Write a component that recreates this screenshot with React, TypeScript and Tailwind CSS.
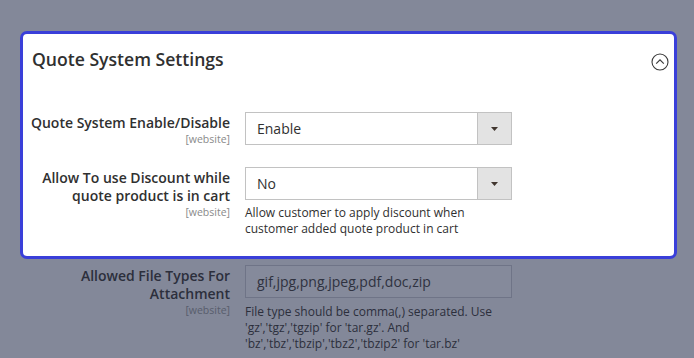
import { ReactNode } from "react";

const font = { fontFamily: '"Open Sans", "Liberation Sans", sans-serif' };

function Label({ lines, dim }: { lines: string[]; dim?: boolean }) {
  return (
    <div className="w-[210px] shrink-0 text-right">
      {lines.map((l) => (
        <div key={l} className={`text-[14px] font-semibold leading-[18px] ${dim ? "text-[#2c2f3c]" : "text-[#303030]"}`}>
          {l}
        </div>
      ))}
      <div className={`text-[10.5px] leading-[14px] ${dim ? "text-[#585d6c]" : "text-[#8a8a8a]"}`}>[website]</div>
    </div>
  );
}

function Select({ value }: { value: string }) {
  return (
    <div className="flex h-[33px] w-[267px] border border-[#c2c2c2] bg-white">
      <div className="flex flex-1 items-center pl-[11px] text-[14px] text-[#303030]">{value}</div>
      <div className="flex w-[34px] items-center justify-center border-l border-[#c2c2c2] bg-[#e3e3e3]">
        <svg width="7" height="4" viewBox="0 0 7 4">
          <path d="M0 0h7L3.5 4z" fill="#41362f" />
        </svg>
      </div>
    </div>
  );
}

function Row({ label, children, dim }: { label: string[]; children: ReactNode; dim?: boolean }) {
  return (
    <div className="flex gap-[15px]">
      <div className="pt-[2px]">
        <Label lines={label} dim={dim} />
      </div>
      <div className="flex flex-col">{children}</div>
    </div>
  );
}

export default function App() {
  return (
    <div className="h-[358px] w-[694px] overflow-hidden bg-[#838899] pt-[31px] pl-[20px]" style={font}>
      <div className="w-[657px] rounded-[7px] border-[3px] border-[#3a3fd9] bg-white pt-[12px] pb-[19px] pl-[9px] pr-[5px]">
        <div className="flex items-center justify-between">
          <h2 className="text-[17.6px] font-semibold leading-[24px] text-[#303030]">Quote System Settings</h2>
          <svg width="18" height="18" viewBox="0 0 18 18" className="mt-[7px]">
            <circle cx="9" cy="9" r="8" fill="none" stroke="#3a3a3a" strokeWidth="1.1" />
            <path d="M5.2 10.6L9 6.9l3.8 3.7" fill="none" stroke="#3a3a3a" strokeWidth="1.2" />
          </svg>
        </div>
        <div className="mt-[41px] flex flex-col gap-[21px]">
          <div className="-ml-[12px]">
            <Row label={["Quote System Enable/Disable"]}>
              <Select value="Enable" />
            </Row>
          </div>
          <div className="-ml-[12px]">
            <Row label={["Allow To use Discount while", "quote product is in cart"]}>
              <Select value="No" />
              <p className="mt-[5px] text-[12px] leading-[16px] text-[#303030]">
                Allow customer to apply discount when
                <br />
                customer added quote product in cart
              </p>
            </Row>
          </div>
        </div>
      </div>
      <div className="mt-[6px]">
        <Row dim label={["Allowed File Types For", "Attachment"]}>
          <div className="flex h-[33px] w-[267px] items-center border border-[#6f7487] bg-[#858a9b] pl-[11px] text-[14px] text-[#2f3240]">
            gif,jpg,png,jpeg,pdf,doc,zip
          </div>
          <p className="mt-[6px] text-[12px] leading-[16px] text-[#2c2f3c]">
            File type should be comma(,) separated. Use
            <br />
            'gz','tgz','tgzip' for 'tar.gz'. And
            <br />
            'bz','tbz','tbzip','tbz2','tbzip2' for 'tar.bz'
          </p>
        </Row>
      </div>
    </div>
  );
}
